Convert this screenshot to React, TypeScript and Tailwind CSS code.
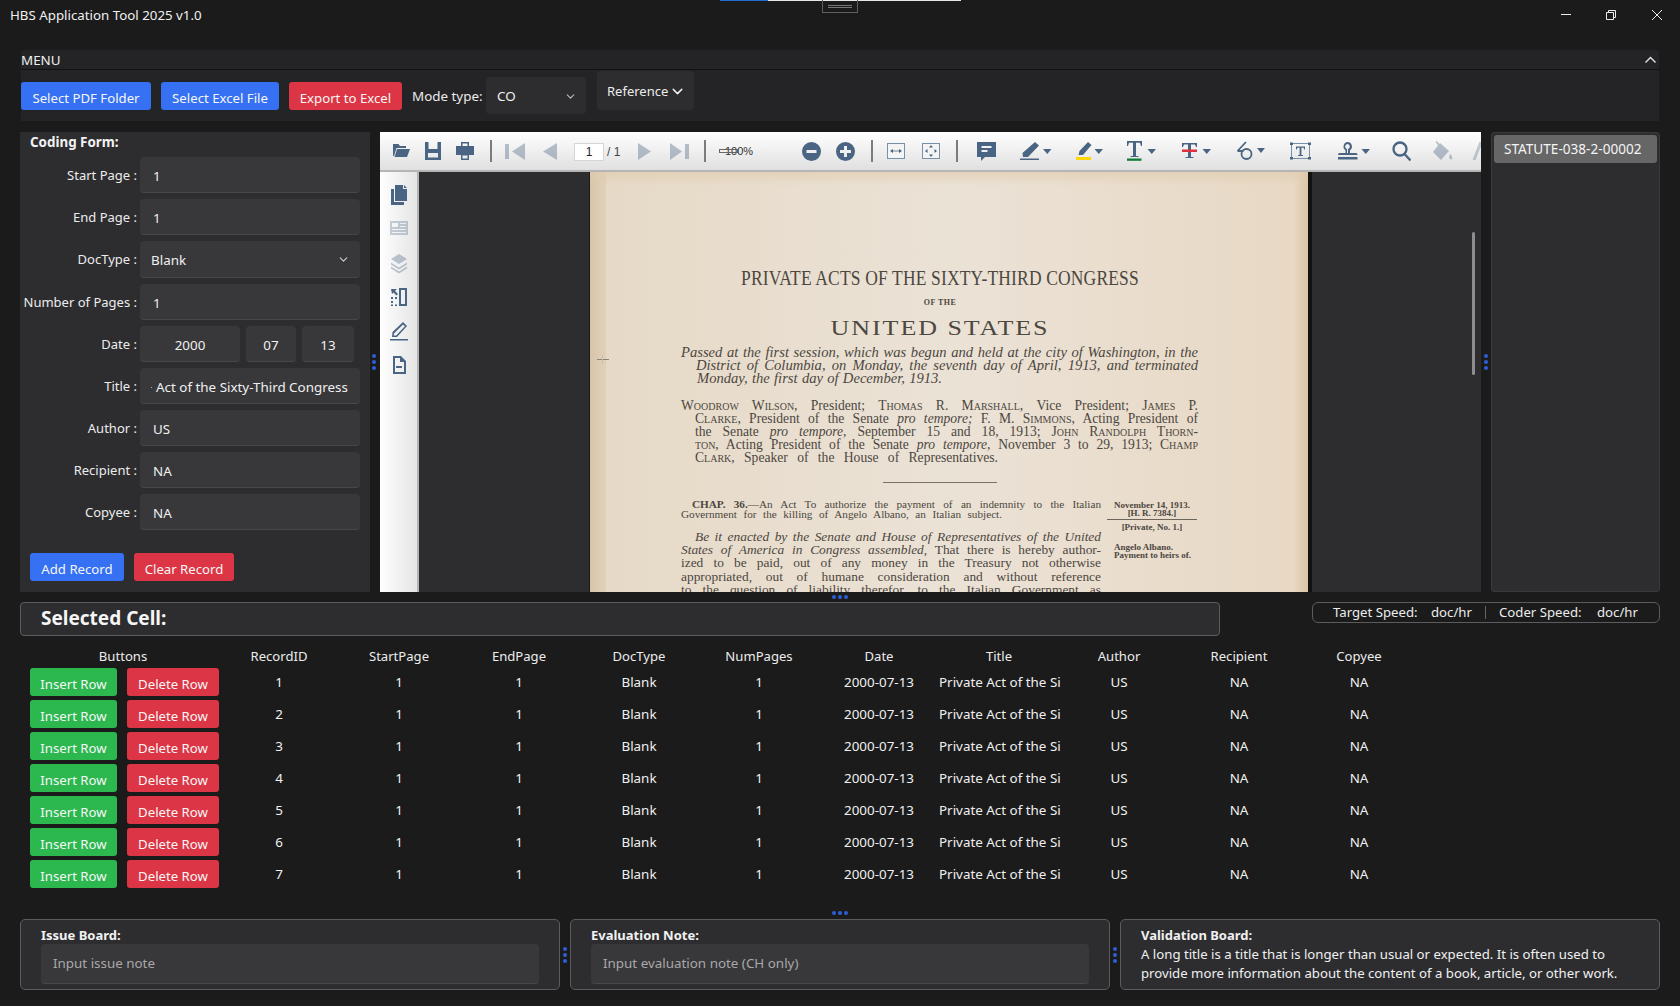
import React from "react";
import { ChevronDown } from "lucide-react";

const SLATE = "#4a6583";
const JL = "block whitespace-nowrap [text-align-last:justify]";

function Btn({ c, children, cls = "" }: { c: "blue" | "red" | "green"; children: React.ReactNode; cls?: string }) {
  const bg = c === "blue" ? "bg-[#3571f2]" : c === "red" ? "bg-[#dc3545]" : "bg-[#2cb84f]";
  return <button className={`${bg} h-7 shrink-0 rounded-[3px] text-[#f6f6f6] text-[13.2px] leading-[24px] pt-[3px] text-center whitespace-nowrap ${cls}`}>{children}</button>;
}

function Box({ cls, children }: { cls: string; children: React.ReactNode }) {
  return <div className={`bg-[#38383b] rounded-[4px] border-b border-[#47474a] flex items-center text-[13.4px] text-[#f0f0f0] whitespace-nowrap ${cls}`}>{children}</div>;
}

function Label({ t }: { t: string }) {
  return <div className="w-[117px] shrink-0 text-right text-[13px] text-[#ececec] whitespace-nowrap pt-px">{t} :</div>;
}

function Field({ label, value }: { label: string; value: string }) {
  return (
    <div className="flex items-center mb-[6px]">
      <Label t={label} />
      <Box cls="ml-[3px] w-[220px] h-[36px] pl-[13px] pt-[3px]"><span>{value}</span></Box>
    </div>
  );
}

function Dots({ vertical = true }: { vertical?: boolean }) {
  return (
    <div className={`flex ${vertical ? "flex-col" : "flex-row"} gap-[2px]`}>
      <span className="w-[4px] h-[4px] rounded-full bg-[#2f5fd6]" />
      <span className="w-[4px] h-[4px] rounded-full bg-[#2f5fd6]" />
      <span className="w-[4px] h-[4px] rounded-full bg-[#2f5fd6]" />
    </div>
  );
}

function I({ children, w, op = 1, cls = "" }: { children: React.ReactNode; w: number; op?: number; cls?: string }) {
  return (
    <svg width={w} height="24" viewBox={`0 0 ${w} 24`} fill={SLATE} opacity={op} className={`shrink-0 ${cls}`}>
      {children}
    </svg>
  );
}

const Caret = ({ x }: { x: number }) => <path d={`M${x} 10h8.500l-4.250 5z`} />;
const Sep = ({ cls }: { cls: string }) => <div className={`w-[2px] h-[22px] bg-[#7c7c7c] shrink-0 ${cls}`} />;

function Toolbar() {
  return (
    <div className="h-[40px] shrink-0 bg-gradient-to-b from-white to-[#e0e0e0] border-b-2 border-[#b5b5b5] flex items-center overflow-hidden">
      <I w={18} cls="ml-[12px]"><path d="M1 5h5.500l1.500 2h6v2H4.500L2 17H1z" /><path d="M5 10h13l-3 8H2.500z" /></I>
      <I w={16} cls="ml-[15px]"><path fillRule="evenodd" d="M0 3h3.500v7h9V3H16v18H0zM3 14v4.500h10V14z" /></I>
      <I w={18} cls="ml-[15px]"><path fillRule="evenodd" d="M5 3h8v4h5v9h-5v5H5v-5H0V7h5zM6.500 4.500V7h5V4.500zM6.500 16.500v3h5v-3z" /></I>
      <Sep cls="ml-[16px]" />
      <I w={20} op={0.38} cls="ml-[13px]"><path d="M0 5h4v15H0zM20 4v17L7 12.500z" /></I>
      <I w={14} op={0.38} cls="ml-[18px]"><path d="M14 4v17L0 12.500z" /></I>
      <div className="ml-[17px] mt-[2px] w-[30px] h-[18px] shrink-0 bg-white border border-[#d6d6d6] text-[12px] leading-[16px] text-center text-[#222] font-['Liberation_Sans',sans-serif]">1</div>
      <span className="ml-[3px] w-[14px] mt-[2px] shrink-0 text-[12px] text-[#444] whitespace-nowrap font-['Liberation_Sans',sans-serif]">/ 1</span>
      <I w={13} op={0.38} cls="ml-[17px]"><path d="M0 4v17l13-8.500z" /></I>
      <I w={19} op={0.38} cls="ml-[19px]"><path d="M0 4v17l12-8.500zM15 5h4v15h-4z" /></I>
      <Sep cls="ml-[15px]" />
      <div className="ml-[13px] relative w-[34px] h-[16px] shrink-0 text-[11px] leading-[16px] text-[#333] font-['Liberation_Sans',sans-serif]">
        <span className="pl-[6px]">100%</span>
        <span className="absolute left-0 top-[6px] w-[19px] h-[4px] border border-[#666]" />
      </div>
      <I w={19} cls="ml-[49px]"><path fillRule="evenodd" d="M9.500 3a9.500 9.500 0 1 0 0 19 9.500 9.500 0 0 0 0-19zM4.500 11h10v3h-10z" /></I>
      <I w={19} cls="ml-[15px]"><path fillRule="evenodd" d="M9.500 3a9.500 9.500 0 1 0 0 19 9.500 9.500 0 0 0 0-19zM8 7h3v4h4v3h-4v4H8v-4H4v-3h4z" /></I>
      <Sep cls="ml-[16px]" />
      <I w={18} cls="ml-[14px]"><rect x="0.500" y="4.500" width="17" height="15" fill="#f4f4f4" stroke="#7890a8" /><path d="M3 12l3-2v4zM15 12l-3-2v4z" /><path d="M6 11.600h6v.8H6z" /></I>
      <I w={18} cls="ml-[17px]"><rect x="0.500" y="4.500" width="17" height="15" fill="#f4f4f4" stroke="#7890a8" /><path d="M9 6l2 2.500H7zM9 18l2-2.500H7zM3 12l2.500-2v4zM15 12l-2.500-2v4z" /></I>
      <Sep cls="ml-[16px]" />
      <I w={19} cls="ml-[19px]"><path fillRule="evenodd" d="M0 3h19v15H8l-4 4v-4H0zM4.500 7v2h10V7zM4.500 11v2h6v-2z" /></I>
      <I w={32} cls="ml-[24px]"><path d="M15 3l4 3.500L8 18H3l-.5-4z" /><path d="M0 19.500h19V21H0z" /><Caret x={23} /></I>
      <I w={27} cls="ml-[24px]"><path d="M12 3l3.500 3L7 16H2.500L3.500 12z" /><path d="M0 18h15v3H0z" fill="#ffd60a" /><Caret x={18.500} /></I>
      <I w={29} cls="ml-[24px]"><path d="M0 2h15v5h-1l-1-3.200H9V17h2.500v1h-8v-1H6V3.800H2L1 7H0z" /><path d="M0 19.500h14.500v2.300H0z" fill="#157a3a" /><Caret x={20.500} /></I>
      <I w={29} cls="ml-[26px]"><path d="M0 4h15v4h-1l-1-2.500H9V18h2.500v1h-8v-1H6V5.500H2L1 8H0z" /><path d="M0 10.500h15v2.500H0z" fill="#e2313e" /><Caret x={20.500} /></I>
      <I w={29} cls="ml-[25px]"><g fill="none" stroke={SLATE} strokeWidth="1.800"><circle cx="10.500" cy="15" r="5" /><path d="M1.500 12L10 3M1.500 12l6 0" /></g><path d="M21 9h8l-4 5z" /></I>
      <I w={21} cls="ml-[25px]"><g fill="none" stroke="#7890a8" strokeWidth="1"><rect x="1.500" y="4.500" width="18" height="15" /></g><path d="M6 7.500h9v3h-.800l-.6-1.800h-2.200v7.300H13v1H8v-1h1.600V8.700H7.400l-.6 1.800H6z" /><path d="M0 3.500h3v2.500H0zM18 3.500h3v2.500h-3zM0 18h3v2.500H0zM18 18h3v2.500h-3z" /></I>
      <I w={32} cls="ml-[27px]"><path fillRule="evenodd" d="M9.500 3a4.500 4.500 0 0 1 2.500 8.200V14h6q1.500 0 1.500 2H0q0-2 1.500-2h6v-2.800A4.500 4.500 0 0 1 9.500 3zm0 2a2.500 2.500 0 0 0-.5 4.900V14h1V9.900A2.500 2.500 0 0 0 9.500 5z" /><path d="M0 18h19.500v2.500H0z" /><Caret x={23.500} /></I>
      <I w={19} cls="ml-[22px]"><g fill="none" stroke={SLATE} strokeWidth="2.300"><circle cx="8" cy="10" r="6.500" /><path d="M12.500 15l6 6.500" /></g></I>
      <I w={22} op={0.38} cls="ml-[20px]"><path d="M9 4l9 8-8 9-8-8zM6 2l3 4-1.500 1-3-4zM19 15q3.500 3 1.500 5.500-3.500 0-1.500-5.500z" /></I>
      <I w={10} op={0.3} cls="ml-[18px]"><path d="M10 3L3 21" fill="none" stroke={SLATE} strokeWidth="3" /></I>
    </div>
  );
}

function Sidebar() {
  return (
    <div className="w-[39px] shrink-0 bg-gradient-to-r from-white to-[#e4e4e4] border-r-2 border-[#b5b5b5] flex flex-col items-center pt-[10px] gap-[10.3px]">
      <I w={18}><path d="M5 3h8v4h4v12H5zM14 3l3 3h-3zM1 7h3v13h10v3H1z" /></I>
      <I w={18} op={0.3}><path fillRule="evenodd" d="M0 5h18v14H0zM2 7v4h6V7zM10 7v1h6V7zM10 10v1h6v-1zM2 13v1h14v-1zM2 16v1h14v-1z" /></I>
      <I w={18} op={0.35}><path d="M9 3l8 5-8 5-8-5zM1 11.500l8 5 8-5v2l-8 5-8-5zM1 15.500l8 5 8-5v2l-8 5-8-5z" /></I>
      <I w={18}><path fillRule="evenodd" d="M9 3h8v18H9zM11 5v14h4V5z" /><path d="M1 12h2v2H1zM5 12h2v2H5zM1 16h2v2H1zM1 19.500h2v1.500H1zM5 19.500h2V21H5zM1 4h6L5 6l3 3-1.500 1.500-3-3L2 9z" /></I>
      <I w={18}><path fillRule="evenodd" d="M13 3l4 4L7 18H2l.5-5zM13 5.500L4 14.500l-.3 2h2.500l8.700-9.300z" /><path d="M0 20h18v1.500H0z" /></I>
      <I w={18}><path fillRule="evenodd" d="M3 3h8l5 5v13H3zM5 5v14h9V9h-4V5zM6 13h6v2H6z" /></I>
    </div>
  );
}

function Scan() {
  return (
    <div className="w-[718px] h-full shrink-0 relative overflow-hidden bg-gradient-to-r from-[#e6d9c6] via-[#ebe2d6] to-[#e8d8c4] font-['Liberation_Serif',serif] text-[#4c473f]">
      <div className="absolute left-0 top-0 bottom-0 w-[13px] bg-gradient-to-r from-[#d6c4a8] to-[#e0d0b8]" />
      <div className="absolute left-[13px] top-0 bottom-0 w-[3px] bg-[#d8c6aa] opacity-50" />
      <div className="absolute right-0 top-0 bottom-0 w-[14px] bg-gradient-to-r from-[#e8d8c4] to-[#dcc4a4]" />
      <div className="absolute left-0 right-0 top-0 h-[14px] bg-gradient-to-b from-[#e0cdb0] to-transparent opacity-70" />

      <div className="absolute left-[7px] top-[187px] w-[12px] h-[1px] bg-[#8a8478]" />
      <div className="absolute left-[12px] top-[183px] w-[1px] h-[9px] bg-[#c9bca8]" />

      <div className="absolute left-[151px] top-[94px] w-[398px] text-[22px] leading-[24px] whitespace-nowrap origin-left scale-x-[0.795] tracking-[0.2px]">PRIVATE ACTS OF THE SIXTY-THIRD CONGRESS</div>
      <div className="absolute left-[300px] top-[126px] w-[100px] text-center text-[8px] leading-[10px] font-bold tracking-[0.5px]">OF THE</div>
      <div className="absolute left-[250px] top-[145px] w-[200px] text-center text-[20px] leading-[22px] tracking-[1.500px] whitespace-nowrap scale-x-[1.300]">UNITED STATES</div>

      <div className="absolute left-[91px] top-[174px] w-[517px] text-[14.600px] leading-[13px] italic">
        <span className={JL}>Passed at the first session, which was begun and held at the city of Washington, in the</span>
        <span className={`${JL} ml-[15px]`}>District of Columbia, on Monday, the seventh day of April, 1913, and terminated</span>
        <span className={`${JL} ml-[16px] w-[245px]`}>Monday, the first day of December, 1913.</span>
      </div>

      <div className="absolute left-[91px] top-[226.500px] w-[517px] text-[13.600px] leading-[13.200px]">
        <span className={`${JL} [font-variant:small-caps]`}>Woodrow Wilson, <span className="[font-variant:normal]">President;</span> Thomas R. Marshall, <span className="[font-variant:normal]">Vice President;</span> James P.</span>
        <span className={`${JL} ml-[14px]`}><span className="[font-variant:small-caps]">Clarke,</span> President of the Senate <i>pro tempore;</i> F. M. <span className="[font-variant:small-caps]">Simmons,</span> Acting President of</span>
        <span className={`${JL} ml-[14px]`}>the Senate <i>pro tempore,</i> September 15 and 18, 1913; <span className="[font-variant:small-caps]">John Randolph Thorn-</span></span>
        <span className={`${JL} ml-[14px]`}><span className="[font-variant:small-caps]">ton,</span> Acting President of the Senate <i>pro tempore,</i> November 3 to 29, 1913; <span className="[font-variant:small-caps]">Champ</span></span>
        <span className={`${JL} ml-[14px] w-[303px]`}><span className="[font-variant:small-caps]">Clark,</span> Speaker of the House of Representatives.</span>
      </div>

      <div className="absolute left-[293px] top-[310px] w-[114px] h-[1px] bg-[#5b564e] opacity-80" />

      <div className="absolute left-[91px] top-[326.500px] w-[420px] text-[11.200px] leading-[10.800px]">
        <span className={`${JL} ml-[11px]`}><b>CHAP. 36.</b>—An Act To authorize the payment of an indemnity to the Italian</span>
        <span className={`${JL} w-[321px]`}>Government for the killing of Angelo Albano, an Italian subject.</span>
      </div>

      <div className="absolute left-[91px] top-[358px] w-[420px] text-[13.400px] leading-[13.200px]">
        <span className={`${JL} ml-[14px]`}><i>Be it enacted by the Senate and House of Representatives of the United</i></span>
        <span className={JL}><i>States of America in Congress assembled,</i> That there is hereby author-</span>
        <span className={JL}>ized to be paid, out of any money in the Treasury not otherwise</span>
        <span className={JL}>appropriated, out of humane consideration and without reference</span>
        <span className={JL}>to the question of liability therefor, to the Italian Government as</span>
      </div>

      <div className="absolute left-[517px] top-[329px] w-[90px] text-center text-[9px] leading-[8px] font-bold whitespace-nowrap">
        <div>November 14, 1913.</div>
        <div>[H. R. 7384.]</div>
        <div className="h-px bg-[#6b655c] mt-[2px] mb-[3px]" />
        <div>[Private, No. 1.]</div>
        <div className="mt-[12px] text-left pl-[7px]">Angelo Albano.</div>
        <div className="text-left pl-[7px]">Payment to heirs of.</div>
      </div>
    </div>
  );
}

function PdfViewer() {
  return (
    <div className="w-[1101px] h-[460px] shrink-0 flex flex-col">
      <Toolbar />
      <div className="flex flex-1 min-h-0">
        <Sidebar />
        <div className="flex-1 bg-[#2d2d30] flex relative min-w-0">
          <div className="w-[171px] shrink-0 border-r border-[#1a1a1c]" />
          <Scan />
          <div className="w-[4px] bg-[#121212] shrink-0" />
          <div className="absolute right-[6px] top-[60px] w-[3px] h-[143px] bg-[#8d8d90] rounded-full" />
        </div>
      </div>
    </div>
  );
}

const ROWS = [1, 2, 3, 4, 5, 6, 7];
const COL = "grid grid-cols-[192px_repeat(10,120px)] items-start";
const CELL = "h-[28px] leading-[28px] whitespace-nowrap";

export default function App() {
  return (
    <div className="w-[1680px] h-[1006px] bg-[#1b1b1b] overflow-hidden relative text-[#f0f0f0] font-['Noto_Sans',sans-serif]">
      {/* title bar */}
      <div className="h-[50px] relative">
        <div className="absolute left-[10px] top-[5px] text-[13.300px] leading-[20px] text-[#f0f0f0]">HBS Application Tool 2025 v1.0</div>
        <div className="absolute left-[720px] top-0 h-px flex">
          <div className="w-[48px] bg-[#1f6fd0]" />
          <div className="w-[193px] bg-[#e8e8e8]" />
        </div>
        <div className="absolute left-[822px] top-0 w-[36px] h-[13px] border border-[#5e5e5e] border-t-0 flex flex-col items-center justify-center gap-[1px]">
          <span className="w-[24px] h-[1px] bg-[#777]" />
          <span className="w-[24px] h-[1px] bg-[#777]" />
        </div>
        <svg className="absolute left-[1560px] top-[9px]" width="104" height="12" viewBox="0 0 104 12" fill="none" stroke="#ececec" strokeWidth="1">
          <path d="M1 5.500h10" />
          <path d="M46.500 3.500h7v7h-7zM48.500 3.500v-2h7v7h-2" />
          <path d="M92 1l10 10M102 1L92 11" />
        </svg>
      </div>

      {/* menu */}
      <div className="ml-[21px] w-[1638px] h-[71px] bg-[#242426] rounded-t-[3px]">
        <div className="h-[20px] border-b border-[#111] relative">
          <span className="text-[13.400px] leading-[19px] block pt-px text-[#f0f0f0]">MENU</span>
          <svg className="absolute right-[3px] top-[6px]" width="11" height="7" viewBox="0 0 11 7" fill="none" stroke="#e5e5e5" strokeWidth="1.400"><path d="M.5 6.500l5-5 5 5" /></svg>
        </div>
        <div className="flex pt-[12px] items-start">
          <Btn c="blue" cls="w-[130px]">Select PDF Folder</Btn>
          <Btn c="blue" cls="w-[118px] ml-[10px]">Select Excel File</Btn>
          <Btn c="red" cls="w-[113px] ml-[10px]">Export to Excel</Btn>
          <span className="ml-[10px] w-[74px] text-[13.400px] leading-[28px] text-[#ececec] whitespace-nowrap">Mode type:</span>
          <div className="-mt-[5px] w-[100px] h-[37px] bg-[#2d2d30] rounded-[4px] flex items-center justify-between pl-[11px] pr-[9px] pt-[2px] text-[13.400px]">
            <span>CO</span><ChevronDown size={13} className="text-[#bcbcbc]" />
          </div>
          <div className="ml-[11px] -mt-[11px] w-[97px] h-[39px] bg-[#2d2d30] rounded-[4px] flex items-center pl-[10px] pt-[2px] text-[13px] text-[#ececec]">
            Reference<ChevronDown size={17} className="text-[#f0f0f0] ml-[1px]" />
          </div>
        </div>
      </div>

      {/* middle */}
      <div className="flex ml-[20px] mt-[11px]">
        <div className="w-[350px] h-[460px] shrink-0 bg-[#2d2d30] flex flex-col">
          <div className="pl-[10px] text-[13.400px] leading-[20px] font-bold text-[#f2f2f2] h-[25px]">Coding Form:</div>
          <Field label="Start Page" value="1" />
          <Field label="End Page" value="1" />
          <div className="flex items-center mb-[6px]">
            <Label t="DocType" />
            <Box cls="ml-[3px] w-[220px] h-[37px] pl-[11px] pr-[10px] pt-[3px] justify-between"><span>Blank</span><ChevronDown size={13} className="text-[#cfcfcf] -mt-[3px]" /></Box>
          </div>
          <Field label="Number of Pages" value="1" />
          <div className="flex items-center mb-[6px]">
            <Label t="Date" />
            <div className="ml-[3px] flex gap-[6px]">
              <Box cls="w-[100px] h-[36px] justify-center pt-[3px]">2000</Box>
              <Box cls="w-[50px] h-[36px] justify-center pt-[3px]">07</Box>
              <Box cls="w-[52px] h-[36px] justify-center pt-[3px]">13</Box>
            </div>
          </div>
          <div className="flex items-center mb-[6px]">
            <Label t="Title" />
            <Box cls="ml-[3px] w-[220px] h-[36px] pl-[11px] pt-[3px]">
              <span className="w-[1px] h-[1px] bg-[#aaa] mr-[4px]" />
              <span>Act of the Sixty-Third Congress</span>
            </Box>
          </div>
          <Field label="Author" value="US" />
          <Field label="Recipient" value="NA" />
          <Field label="Copyee" value="NA" />
          <div className="flex gap-[10px] pl-[10px] mt-[17px]">
            <Btn c="blue" cls="w-[94px]">Add Record</Btn>
            <Btn c="red" cls="w-[100px]">Clear Record</Btn>
          </div>
        </div>
        <div className="w-[10px] shrink-0 pt-[222px] pl-[2px]"><Dots /></div>
        <PdfViewer />
        <div className="w-[10px] shrink-0 pt-[222px] pl-[3px]"><Dots /></div>
        <div className="w-[169px] h-[460px] shrink-0 bg-[#2d2d30] border border-[#3a3a3d] rounded-[3px] p-[2px]">
          <div className="h-[28px] rounded-[3px] bg-[#666] text-[13.600px] leading-[28px] pl-[10px] text-[#f4f4f4] whitespace-nowrap">STATUTE-038-2-00002</div>
        </div>
      </div>

      <div className="h-[10px] flex items-center pl-[832px]"><Dots vertical={false} /></div>

      {/* selected cell */}
      <div className="flex ml-[20px] items-start">
        <div className="w-[1200px] h-[34px] bg-[#2d2d30] border border-[#5c5c5e] rounded-[4px] pl-[20px] text-[19px] leading-[31px] font-bold text-[#f5f5f5]">Selected Cell:</div>
        <div className="ml-[92px] w-[348px] h-[21px] border border-[#5c5c5e] rounded-[6px] flex items-center pl-[20px] text-[13.200px] leading-[19px] text-[#ececec] whitespace-nowrap">
          <span className="w-[84px]">Target Speed:</span><span className="ml-[14px] w-[42px]">doc/hr</span>
          <span className="ml-[12px] w-px h-[13px] bg-[#666]" />
          <span className="ml-[13px] w-[84px]">Coder Speed:</span><span className="ml-[14px]">doc/hr</span>
        </div>
      </div>

      {/* table */}
      <div className="ml-[27px] mt-[10px]">
        <div className={`${COL} h-[22px] text-[13.100px] leading-[20px] text-center text-[#ececec]`}>
          {["Buttons", "RecordID", "StartPage", "EndPage", "DocType", "NumPages", "Date", "Title", "Author", "Recipient", "Copyee"].map((h) => (
            <div key={h}>{h}</div>
          ))}
        </div>
        {ROWS.map((r) => (
          <div key={r} className={`${COL} h-[32px] text-[13.400px] text-center text-[#f0f0f0]`}>
            <div className="flex pl-[3px] gap-[10px]">
              <Btn c="green" cls="w-[87px]">Insert Row</Btn>
              <Btn c="red" cls="w-[92px]">Delete Row</Btn>
            </div>
            <div className={CELL}>{r}</div>
            <div className={CELL}>1</div>
            <div className={CELL}>1</div>
            <div className={CELL}>Blank</div>
            <div className={CELL}>1</div>
            <div className={CELL}>2000-07-13</div>
            <div className={CELL}>Private Act of the Si</div>
            <div className={CELL}>US</div>
            <div className={CELL}>NA</div>
            <div className={CELL}>NA</div>
          </div>
        ))}
      </div>

      <div className="mt-[19px] pl-[832px]"><Dots vertical={false} /></div>

      {/* boards */}
      <div className="ml-[20px] mt-[4px] flex">
        <div className="w-[540px] h-[71px] bg-[#2d2d30] border border-[#5c5c5e] rounded-[5px] px-[20px] pt-[7px]">
          <div className="text-[13px] leading-[17px] font-bold text-[#f2f2f2]">Issue Board:</div>
          <div className="h-[40px] bg-[#38383b] rounded-[4px] border-b border-[#47474a] pl-[12px] text-[13.400px] leading-[38px] text-[#a8a8a8]">Input issue note</div>
        </div>
        <div className="w-[10px] flex items-center justify-center"><Dots /></div>
        <div className="w-[540px] h-[71px] bg-[#2d2d30] border border-[#5c5c5e] rounded-[5px] px-[20px] pt-[7px]">
          <div className="text-[13px] leading-[17px] font-bold text-[#f2f2f2]">Evaluation Note:</div>
          <div className="h-[40px] bg-[#38383b] rounded-[4px] border-b border-[#47474a] pl-[12px] text-[13.400px] leading-[38px] text-[#a8a8a8]">Input evaluation note (CH only)</div>
        </div>
        <div className="w-[10px] flex items-center justify-center"><Dots /></div>
        <div className="w-[540px] h-[71px] bg-[#2d2d30] border border-[#5c5c5e] rounded-[5px] px-[20px] pt-[7px] text-[13.200px] text-[#f0f0f0]">
          <div className="font-bold text-[13px] leading-[16px] mb-[2px]">Validation Board:</div>
          <div className="leading-[19px]">A long title is a title that is longer than usual or expected. It is often used to provide more information about the content of a book, article, or other work.</div>
        </div>
      </div>
    </div>
  );
}
